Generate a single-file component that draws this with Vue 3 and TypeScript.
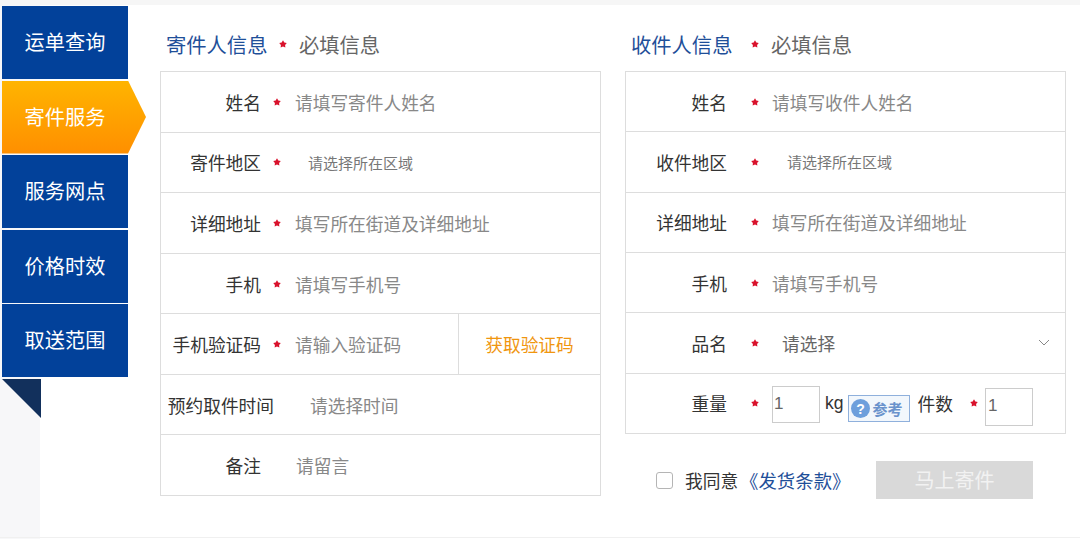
<script setup lang="ts">
interface Row { label: string; req?: boolean; text: string; kind?: string }
const menu: string[] = ['运单查询', '寄件服务', '服务网点', '价格时效', '取送范围']
const sender: Row[] = [
  { label: '姓名', req: true, text: '请填写寄件人姓名' },
  { label: '寄件地区', req: true, text: '请选择所在区域', kind: 'region' },
  { label: '详细地址', req: true, text: '填写所在街道及详细地址' },
  { label: '手机', req: true, text: '请填写手机号' },
  { label: '手机验证码', req: true, text: '请输入验证码', kind: 'code' },
  { label: '预约取件时间', text: '请选择时间', kind: 'time' },
  { label: '备注', text: '请留言', kind: 'note' },
]
const receiver: Row[] = [
  { label: '姓名', req: true, text: '请填写收件人姓名' },
  { label: '收件地区', req: true, text: '请选择所在区域', kind: 'region' },
  { label: '详细地址', req: true, text: '填写所在街道及详细地址' },
  { label: '手机', req: true, text: '请填写手机号' },
  { label: '品名', req: true, text: '请选择', kind: 'select' },
]
const starPoints = '4,0.2 5.3,2.4 7.8,3 6.1,4.9 6.35,7.4 4,6.4 1.65,7.4 1.9,4.9 0.2,3 2.7,2.4'
</script>

<template>
  <div class="page">
    <nav class="menu">
      <div v-for="(m, i) in menu" :key="m" class="menu-item" :class="{ active: i === 1 }">{{ m }}</div>
      <svg class="fold" width="39" height="39" viewBox="0 0 39 39"><polygon points="0,0 39,0 39,39" fill="#12305c" /></svg>
    </nav>

    <section class="col col-left">
      <h2 class="head">
        <span class="title">寄件人信息</span>
        <svg class="star" width="8" height="8" viewBox="0 0 8 8"><polygon :points="starPoints" fill="#d9122c" /></svg>
        <span class="hint">必填信息</span>
      </h2>
      <div class="table table-left">
        <div v-for="r in sender" :key="r.label" class="row" :class="r.kind">
          <span class="label">{{ r.label }}</span>
          <span class="star-cell">
            <svg v-if="r.req" width="8" height="8" viewBox="0 0 8 8"><polygon :points="starPoints" fill="#d9122c" /></svg>
          </span>
          <span class="value">{{ r.text }}</span>
          <span v-if="r.kind === 'code'" class="get-code">获取验证码</span>
        </div>
      </div>
    </section>

    <section class="col col-right">
      <h2 class="head">
        <span class="title">收件人信息</span>
        <svg class="star" width="8" height="8" viewBox="0 0 8 8"><polygon :points="starPoints" fill="#d9122c" /></svg>
        <span class="hint">必填信息</span>
      </h2>
      <div class="table table-right">
        <div v-for="r in receiver" :key="r.label" class="row" :class="r.kind">
          <span class="label">{{ r.label }}</span>
          <span class="star-cell">
            <svg width="8" height="8" viewBox="0 0 8 8"><polygon :points="starPoints" fill="#d9122c" /></svg>
          </span>
          <span class="value">{{ r.text }}</span>
          <svg v-if="r.kind === 'select'" class="chevron" width="12" height="7" viewBox="0 0 12 7"><path d="M1 1l5 5 5-5" fill="none" stroke="#888" stroke-width="1" /></svg>
        </div>
        <div class="row weight">
          <span class="label">重量</span>
          <span class="star-cell">
            <svg width="8" height="8" viewBox="0 0 8 8"><polygon :points="starPoints" fill="#d9122c" /></svg>
          </span>
          <span class="num">1</span>
          <span class="unit">kg</span>
          <span class="ref">
            <svg width="19" height="19" viewBox="0 0 19 19"><circle cx="9.5" cy="9.5" r="9.5" fill="#6d9fdc" /><text x="9.5" y="14.5" text-anchor="middle" font-size="14" font-weight="700" fill="#fff" font-family="Liberation Sans, sans-serif">?</text></svg>
            <span class="ref-text">参考</span>
          </span>
          <span class="count-label">件数</span>
          <svg class="count-star" width="8" height="8" viewBox="0 0 8 8"><polygon :points="starPoints" fill="#d9122c" /></svg>
          <span class="num num-2">1</span>
        </div>
      </div>
      <div class="agree">
        <span class="check"></span>
        <span class="agree-text">我同意</span>
        <span class="link">《发货条款》</span>
        <span class="submit">马上寄件</span>
      </div>
    </section>
  </div>
</template>

<style>
html, body { margin: 0; background: #fff; }
</style>

<style scoped>
.page {
  width: 1080px;
  height: 539px;
  box-sizing: border-box;
  display: flex;
  align-items: flex-start;
  overflow: hidden;
  padding-top: 6px;
  background:
    linear-gradient(#f6f6f6, #f6f6f6) 0 0 / 100% 5px no-repeat,
    linear-gradient(#f0f0f0, #f0f0f0) 0 537px / 100% 1px no-repeat,
    linear-gradient(#f7f7f9, #f7f7f9) 0 0 / 40px 100% no-repeat,
    #fff;
  font-family: "Noto Sans CJK SC", "Liberation Sans", sans-serif;
  color: #333;
}
.menu {
  width: 126px;
  margin-left: 2px;
  display: flex;
  flex-direction: column;
  gap: 1.5px;
  flex: none;
}
.menu-item {
  height: 73px;
  background: #02419a;
  color: #fff;
  font-size: 20.2px;
  line-height: 71px;
  text-align: center;
  white-space: nowrap;
}
.menu-item.active {
  width: 144px;
  padding-right: 18px;
  box-sizing: border-box;
  background: linear-gradient(#ffb400, #ff8f00);
  clip-path: polygon(0 0, 126px 0, 100% 50%, 126px 100%, 0 100%);
}
.fold { margin-top: 0.5px; }
.col { width: 441px; flex: none; }
.col-left { margin-left: 32px; }
.col-right { margin-left: 24px; }
.head {
  height: 65px;
  margin: 0;
  box-sizing: border-box;
  display: flex;
  align-items: center;
  padding: 10px 0 0 6px;
  font-weight: 400;
}
.title { font-size: 20.3px; color: #1f4f99; width: 101px; white-space: nowrap; }
.hint { font-size: 20.3px; color: #666; white-space: nowrap; }
.star { margin: 0 12px; }
.col-right .star { margin: 0 12px 0 19px; }
.table {
  border: 1px solid #ddd;
  box-sizing: border-box;
  display: flex;
  flex-direction: column;
}
.table-left { height: 425px; }
.table-right { height: 363px; }
.row {
  flex: 1 1 0;
  display: flex;
  align-items: center;
  min-height: 0;
  font-size: 17.7px;
  border-top: 1px solid #ddd;
  box-sizing: border-box;
}
.row:first-child { border-top: 0; }
.label { width: 100px; text-align: right; flex: none; color: #333; white-space: nowrap; }
.star-cell { width: 34px; flex: none; display: flex; justify-content: center; padding-right: 2px; box-sizing: border-box; }
.table-right .label { width: 101px; }
.table-right .star-cell { width: 45px; justify-content: flex-end; padding-right: 13px; }
.value { color: #888; white-space: nowrap; }
.region .value { font-size: 15px; margin-left: 13px; color: #777; }
.table-right .region .value { margin-left: 15px; }
.time .label { width: 113px; }
.time .star-cell { width: 36px; }
.note .star-cell { width: 35px; }
.select .value { margin-left: 10px; color: #666; }
.get-code {
  margin-left: auto;
  width: 142px;
  align-self: stretch;
  box-sizing: border-box;
  border-left: 1px solid #ddd;
  display: flex;
  align-items: center;
  justify-content: center;
  color: #f0960f;
}
.chevron { margin-left: auto; margin-right: 15px; }
.num {
  width: 48px;
  height: 37px;
  margin-top: 3px;
  box-sizing: border-box;
  border: 1px solid #ccc;
  padding: 3px 0 0 1px;
  line-height: 28px;
  font-family: "Liberation Sans", sans-serif;
  font-size: 17px;
  color: #666;
}
.unit { margin-left: 5px; font-family: "Liberation Sans", sans-serif; font-size: 17.5px; }
.ref {
  margin-left: 5px;
  margin-top: 10px;
  width: 62px;
  height: 27px;
  box-sizing: border-box;
  border: 1px solid #8fb0dc;
  background: #f2f7fc;
  display: flex;
  align-items: center;
  gap: 2px;
  padding-left: 2px;
}
.ref-text { font-size: 15px; color: #6b93cc; font-weight: 700; line-height: 1; white-space: nowrap; }
.count-label { margin-left: 7px; }
.count-star { margin-left: 17px; }
.num-2 { margin-left: 7px; height: 38px; margin-top: 7px; padding-left: 2px; }
.agree {
  height: 92px;
  display: flex;
  align-items: center;
  padding-left: 31px;
  font-size: 17.7px;
}
.check {
  width: 17px;
  height: 17px;
  box-sizing: border-box;
  border: 1px solid #b5b5b5;
  border-radius: 3px;
  background: #fff;
}
.agree-text { margin-left: 12px; white-space: nowrap; }
.link { color: #1f4f99; margin-left: 2px; font-size: 18.4px; white-space: nowrap; }
.submit {
  margin-left: auto;
  margin-right: 33px;
  width: 157px;
  height: 38px;
  background: #d9d9d9;
  color: #f2f2f2;
  font-size: 20px;
  line-height: 38px;
  text-align: center;
}
</style>
